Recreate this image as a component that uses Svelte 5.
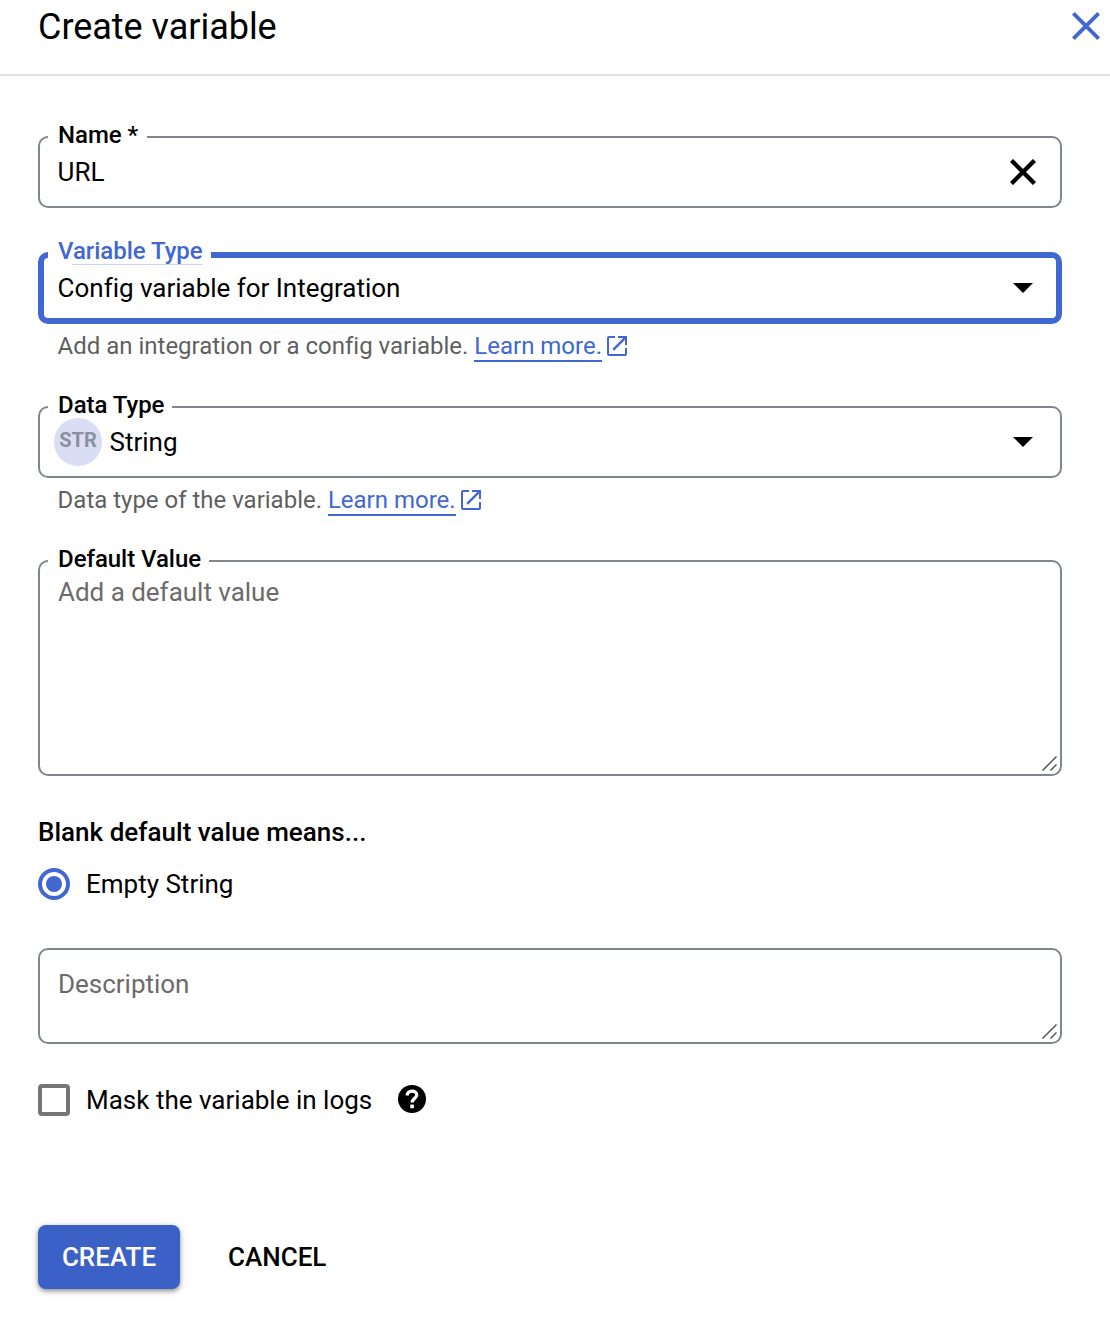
<script>
  let name = $state('URL');
  let defaultValue = $state('');
  let description = $state('');
  let masked = $state(false);
</script>

{#snippet external()}
  <svg class="external" width="20" height="20" viewBox="0 0 20 20" fill="none" stroke="currentColor" stroke-width="2">
    <path d="M8 1H2Q1 1 1 2V18Q1 19 2 19H18Q19 19 19 18V12" />
    <path d="M11 1H19V9" />
    <path d="M18.6 1.4L6.2 13.8" stroke-width="2.4" />
  </svg>
{/snippet}

{#snippet arrow()}
  <svg class="arrow" width="20" height="10" viewBox="0 0 20 10"><path d="M0 0H20L10 10Z" /></svg>
{/snippet}

{#snippet grip()}
  <svg class="grip" width="16" height="16" viewBox="0 0 16 16" fill="none" stroke="#555" stroke-width="1.5">
    <path d="M1.5 14.5L15.5 .5M9.5 14.5L15.5 8.5" />
  </svg>
{/snippet}

<main class="panel">
  <header>
    <h1>Create variable</h1>
    <button class="plain close" aria-label="Close">
      <svg width="28" height="28" viewBox="0 0 28 28" fill="none" stroke="#4067d2" stroke-width="3.9"><path d="M1.4 1.4L26.6 26.6M26.6 1.4L1.4 26.6" /></svg>
    </button>
  </header>

  <form onsubmit={(e) => e.preventDefault()}>
    <div class="field">
      <label class="label name" for="name">Name *</label>
      <input id="name" class="value" bind:value={name} />
      <button type="button" class="plain clear" aria-label="Clear" onclick={() => (name = '')}>
        <svg width="26" height="26" viewBox="0 0 26 26" fill="none" stroke="#000" stroke-width="4.4"><path d="M1.5 1.5L24.5 24.5M24.5 1.5L1.5 24.5" /></svg>
      </button>
    </div>

    <div class="group">
      <div class="field focused">
        <span class="label">Variable Type</span>
        <span class="value">Config variable for Integration</span>
        {@render arrow()}
      </div>
      <p class="hint">Add an integration or a config variable. <span class="link">Learn more.</span>{@render external()}</p>
    </div>

    <div class="group">
      <div class="field">
        <span class="label">Data Type</span>
        <span class="badge">STR</span>
        <span class="value">String</span>
        {@render arrow()}
      </div>
      <p class="hint">Data type of the variable. <span class="link">Learn more.</span>{@render external()}</p>
    </div>

    <div class="field area default">
      <label class="label" for="default">Default Value</label>
      <textarea id="default" placeholder="Add a default value" bind:value={defaultValue}></textarea>
      {@render grip()}
    </div>

    <h2>Blank default value means...</h2>
    <div class="option">
      <span class="radio"></span>
      <span class="text">Empty String</span>
    </div>

    <div class="field area description">
      <textarea aria-label="Description" placeholder="Description" bind:value={description}></textarea>
      {@render grip()}
    </div>

    <div class="option mask">
      <button type="button" class="plain checkbox" role="checkbox" aria-checked={masked} aria-label="Mask" onclick={() => (masked = !masked)}></button>
      <span class="text">Mask the variable in logs</span>
      <svg class="help" width="28" height="28" viewBox="0 0 28 28">
        <circle cx="14" cy="14" r="14" />
        <path d="M9.2 10.4C9.2 7.8 11.2 6.2 14 6.2S18.7 7.8 18.7 10.2C18.7 13.3 14.1 13.6 14.1 17.6" fill="none" stroke="#fff" stroke-width="3.3" />
        <rect x="12.3" y="19.6" width="3.6" height="3.6" fill="#fff" />
      </svg>
    </div>

    <footer>
      <button type="button" class="plain create">CREATE</button>
      <button type="button" class="plain cancel">CANCEL</button>
    </footer>
  </form>
</main>

<style>
  :global(body) {
    background: #fff;
  }
  .panel {
    box-sizing: border-box;
    height: 1322px;
    overflow: hidden;
    font-family: Roboto, sans-serif;
    font-size: 26px;
    color: #000;
  }
  .panel *,
  .panel *::before {
    box-sizing: border-box;
  }
  svg {
    display: block;
    flex: none;
  }
  .plain {
    padding: 0;
    border: 0;
    background: none;
    font: inherit;
    color: inherit;
  }
  header {
    display: flex;
    align-items: flex-start;
    justify-content: space-between;
    height: 76px;
    padding: 4px 10px 0 38px;
    border-bottom: 2px solid #e0e0e0;
  }
  h1 {
    margin: 0;
    font-size: 36px;
    line-height: 46px;
    letter-spacing: -0.03px;
    font-weight: 400;
  }
  .close {
    margin-top: 8px;
  }
  form {
    display: flex;
    flex-direction: column;
    padding: 60px 48px 0 38px;
  }
  .field {
    position: relative;
    display: flex;
    align-items: center;
    height: 72px;
    padding: 0 24px 0 17.6px;
    border: 2px solid #80868b;
    border-radius: 10px;
  }
  .focused {
    padding: 0 20px 0 13.6px;
    border: 6px solid #4067d2;
  }
  .label {
    position: absolute;
    left: 8px;
    top: -17px;
    padding: 0 8px 0 10px;
    background: #fff;
    font-size: 24px;
    line-height: 28px;
    letter-spacing: -0.04px;
    font-weight: 500;
  }
  .label.name {
    padding-right: 9px;
  }
  .focused .label {
    left: 4px;
    top: -21px;
    color: #4067d2;
  }
  .focused .label::after {
    content: '';
    display: block;
    height: 1px;
    margin: -1px 0 0 14px;
    background: #c9d6f6;
  }
  .value {
    flex: 1;
    min-width: 0;
    padding: 0;
    border: 0;
    outline: 0;
    background: none;
    font: inherit;
    line-height: 32px;
    letter-spacing: -0.02px;
    color: inherit;
  }
  .arrow {
    margin-right: 3px;
  }
  .group {
    margin-top: 44px;
  }
  .hint {
    display: flex;
    align-items: center;
    height: 38px;
    margin: 0;
    padding: 6px 19.6px 0;
    font-size: 24px;
    line-height: 32px;
    letter-spacing: -0.01px;
    color: #5f5f5f;
    white-space: pre;
  }
  .link {
    height: 32px;
    border-bottom: 2px solid #4067d2;
    color: #4067d2;
  }
  .external {
    margin-left: 5.4px;
    color: #4067d2;
  }
  .badge {
    position: relative;
    width: 48px;
    height: 48px;
    margin: 0 7.6px 0 -3.6px;
    border-radius: 50%;
    background: #d9def5;
    color: #8a919e;
    font-size: 20px;
    line-height: 44px;
    font-weight: 700;
    text-align: center;
  }
  .area {
    padding: 0;
  }
  .default {
    height: 216px;
    margin-top: 44px;
  }
  textarea {
    width: 100%;
    height: 100%;
    padding: 14px 18px;
    border: 0;
    outline: 0;
    background: none;
    resize: none;
    font: inherit;
    line-height: 32px;
    letter-spacing: -0.02px;
  }
  textarea::placeholder {
    color: #6b6b6b;
  }
  .grip {
    position: absolute;
    right: 3px;
    bottom: 2px;
  }
  h2 {
    margin: 40px 0 0;
    font-size: 26px;
    line-height: 32px;
    letter-spacing: 0.02px;
    font-weight: 500;
  }
  .option {
    display: flex;
    align-items: center;
    height: 32px;
    margin-top: 20px;
  }
  .radio {
    display: grid;
    place-items: center;
    width: 32px;
    height: 32px;
    border: 4px solid #4067d2;
    border-radius: 50%;
  }
  .radio::before {
    content: '';
    width: 16px;
    height: 16px;
    border-radius: 50%;
    background: #4067d2;
  }
  .text {
    margin-left: 16px;
    line-height: 32px;
  }
  .description {
    height: 96px;
    margin-top: 48px;
  }
  .description textarea {
    padding-top: 18px;
  }
  .mask {
    margin-top: 40px;
  }
  .checkbox {
    width: 32px;
    height: 32px;
    border: 4px solid #757575;
    border-radius: 4px;
  }
  .help {
    margin: -2px 0 0 26px;
  }
  footer {
    display: flex;
    gap: 48px;
    margin-top: 109px;
  }
  .create,
  .cancel {
    height: 64px;
    font-weight: 500;
  }
  .create {
    width: 142px;
    border-radius: 8px;
    background: #3b61c6;
    box-shadow: 0 2px 4px rgba(0, 0, 0, 0.35), 0 2px 8px rgba(0, 0, 0, 0.15);
    color: #fff;
  }
</style>
